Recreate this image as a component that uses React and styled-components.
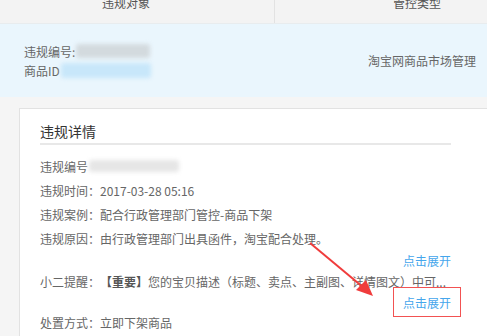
import React from "react";
import styled, { createGlobalStyle } from "styled-components";

const Global = createGlobalStyle`
  html, body { margin: 0; padding: 0; background: #ffffff; }
  body { font-family: "Noto Sans CJK SC", "Noto Sans", sans-serif; }
`;

const Page = styled.div`
  position: relative;
  width: 487px;
  height: 336px;
  overflow: hidden;
  background: #f5f5f5;
  font-size: 12px;
  color: #666;
`;

const HeaderRow = styled.div`
  display: grid;
  grid-template-columns: 274px 1fr;
  height: 23px;
  background: #f3f3f3;
  border-bottom: 1px solid #e8ecee;
`;

const HeaderCell = styled.div`
  overflow: hidden;
  padding-left: ${(p) => p.$pad}px;
  border-left: ${(p) => (p.$divided ? "1px solid #e2e2e2" : "none")};
  line-height: 12px;
  color: #555;
  & > span { display: block; margin-top: -3px; }
`;

const InfoRow = styled.div`
  display: grid;
  grid-template-columns: 274px 1fr;
  height: 73px;
  background: #eaf6fd;
  color: #666;
`;

const InfoCell = styled.div`
  display: flex;
  flex-direction: column;
  justify-content: center;
  padding-left: ${(p) => p.$pad}px;
  line-height: 19px;
`;

const Line = styled.div`
  display: flex;
  align-items: center;
`;

const Blur = styled.span`
  display: inline-block;
  width: ${(p) => p.$w}px;
  height: ${(p) => p.$h}px;
  background: ${(p) => p.$c};
  filter: blur(2px);
  border-radius: 3px;
  margin-left: 1px;
`;

const Gap = styled.div`
  height: 11px;
`;

const Card = styled.div`
  margin-left: 19px;
  background: #ffffff;
  border: 1px solid #e2e2e2;
  border-right: none;
  padding: 12px 36px 0 20px;
  height: 240px;
`;

const Title = styled.div`
  font-size: 14px;
  line-height: 20px;
  color: #333;
  padding-bottom: 2px;
  border-bottom: 2px solid #e8e8e8;
`;

const List = styled.div`
  display: flex;
  flex-direction: column;
  margin-top: 9px;
`;

const Row = styled.div`
  display: flex;
  align-items: center;
  height: ${(p) => p.$h}px;
  white-space: nowrap;
  color: #666;
  & b { font-weight: bold; color: #555; }
`;

const LinkRow = styled.div`
  display: flex;
  justify-content: flex-end;
  align-items: center;
  height: ${(p) => p.$h}px;
`;

const Link = styled.span`
  position: relative;
  color: #45a6ec;
  cursor: pointer;
  ${(p) =>
    p.$boxed &&
    `
    &::after {
      content: "";
      position: absolute;
      left: -10px;
      right: -10px;
      top: -7px;
      bottom: -6px;
      border: 1.5px solid #f25252;
    }
  `}
`;

const Overlay = styled.svg`
  position: absolute;
  left: 0;
  top: 0;
  pointer-events: none;
`;

export default function App() {
  return (
    <>
      <Global />
      <Page>
        <HeaderRow>
          <HeaderCell $pad={102}><span>违规对象</span></HeaderCell>
          <HeaderCell $pad={118} $divided><span>管控类型</span></HeaderCell>
        </HeaderRow>
        <InfoRow>
          <InfoCell $pad={24}>
            <Line>违规编号:<Blur $w={74} $h={14} $c="#d3dade" /></Line>
            <Line>商品ID<Blur $w={90} $h={15} $c="#c8e7fa" /></Line>
          </InfoCell>
          <InfoCell $pad={94}>
            <Line>淘宝网商品市场管理</Line>
          </InfoCell>
        </InfoRow>
        <Gap />
        <Card>
          <Title>违规详情</Title>
          <List>
            <Row $h={24}>违规编号<Blur $w={90} $h={12} $c="#e6e6e6" /></Row>
            <Row $h={24}>违规时间：2017-03-28 05:16</Row>
            <Row $h={24}>违规案例：配合行政管理部门管控-商品下架</Row>
            <Row $h={24}>违规原因：由行政管理部门出具函件，淘宝配合处理。</Row>
            <LinkRow $h={20}><Link>点击展开</Link></LinkRow>
            <Row $h={22}>小二提醒：<b>【重要】</b>您的宝贝描述（标题、卖点、主副图、详情图文）中可...</Row>
            <LinkRow $h={20}><Link $boxed>点击展开</Link></LinkRow>
            <Row $h={20}>处置方式：立即下架商品</Row>
          </List>
        </Card>
        <Overlay width="487" height="336" viewBox="0 0 487 336">
          <line x1="310" y1="243" x2="364" y2="288" stroke="#f03c3c" strokeWidth="2" />
          <polygon points="373,296 356,290 366,280" fill="#f03c3c" />
        </Overlay>
      </Page>
    </>
  );
}
